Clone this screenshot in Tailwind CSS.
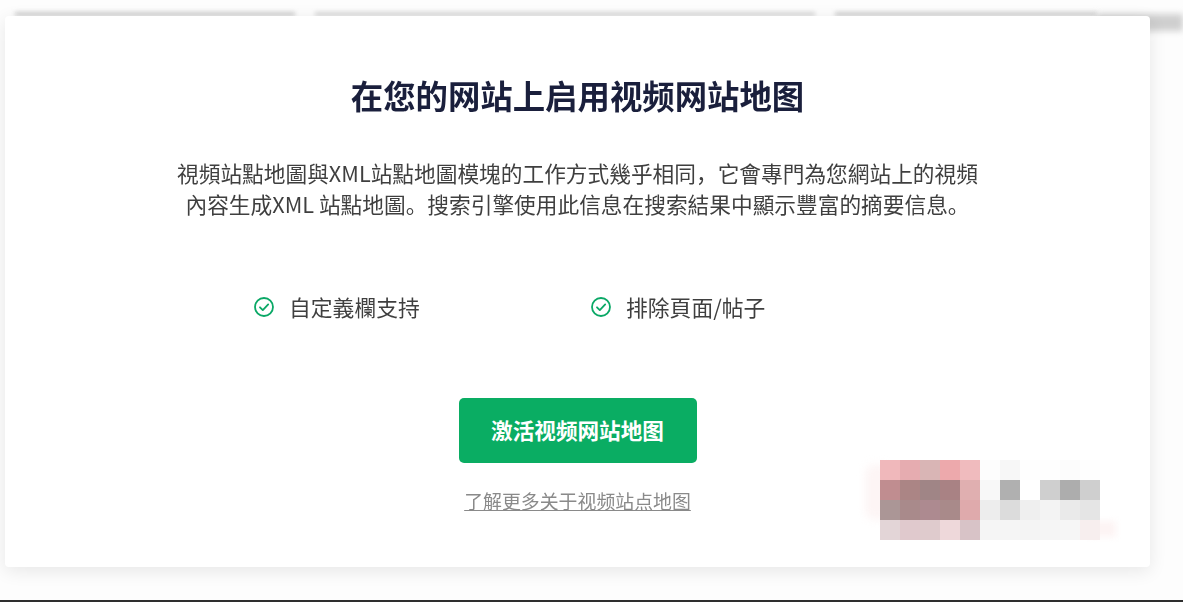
<!DOCTYPE html>
<html lang="zh">
<head>
  <meta charset="UTF-8" />
  <title>Video Sitemap</title>
  <script src="https://cdn.jsdelivr.net/npm/@tailwindcss/browser@4"></script>
</head>
<body class="bg-white font-['Noto_Sans_CJK_SC','Noto_Sans',sans-serif]">
  <div class="relative h-[602px] w-[1183px] overflow-hidden bg-[#fdfdfd] pl-[5px] pt-[16px]">
    <!-- blurred page behind the dialog -->
    <div class="absolute left-[15px] top-[12px] h-[4px] w-[280px] bg-[#cdcdcd] blur-[2px]"></div>
    <div class="absolute left-[315px] top-[12px] h-[4px] w-[500px] bg-[#d6d6d6] blur-[2px]"></div>
    <div class="absolute left-[835px] top-[12px] h-[4px] w-[262px] bg-[#cdcdcd] blur-[2px]"></div>
    <div class="absolute left-[1097px] top-[14px] h-[17px] w-[86px] bg-[#cfcfcf] blur-[3px]"></div>
    <div class="absolute bottom-0 left-0 h-[2px] w-full bg-[#2e2e2e]"></div>

    <div class="relative flex h-[551px] w-[1145px] flex-col items-center rounded-[4px] bg-white pt-[57px] shadow-[0_4px_18px_rgba(0,0,0,0.09)]">
      <h1 class="text-[32.4px] font-bold leading-[44px] text-[#1a1f3c] blur-[0.3px]">在您的网站上启用视频网站地图</h1>
      <p class="mt-[40px] w-[840px] text-center text-[21.7px] leading-[31px] text-[#3f3f3f] blur-[0.3px]">視頻站點地圖與XML站點地圖模塊的工作方式幾乎相同&#xFF0C;它會專門為您網站上的視頻<br />內容生成XML 站點地圖。搜索引擎使用此信息在搜索結果中顯示豐富的摘要信息。</p>

      <div class="mt-[73px] flex w-full pl-[249px] text-[21.8px] leading-[30px] text-[#3f3f3f]">
        <div class="flex w-[337px] items-center gap-[15px]">
          <svg class="h-[20px] w-[20px]" viewBox="0 0 20 20" fill="none" stroke="#0aa866" stroke-width="1.8" stroke-linecap="round" stroke-linejoin="round"><circle cx="10" cy="10" r="9" /><path d="M6 10.3l2.8 2.8L14.2 7.4" /></svg>
          <span class="blur-[0.3px]">自定義欄支持</span>
        </div>
        <div class="flex items-center gap-[15px]">
          <svg class="h-[20px] w-[20px]" viewBox="0 0 20 20" fill="none" stroke="#0aa866" stroke-width="1.8" stroke-linecap="round" stroke-linejoin="round"><circle cx="10" cy="10" r="9" /><path d="M6 10.3l2.8 2.8L14.2 7.4" /></svg>
          <span class="blur-[0.3px]">排除頁面/帖子</span>
        </div>
      </div>

      <button class="mt-[76px] h-[65px] w-[238px] rounded-[5px] bg-[#0aad63] text-[21.6px] font-bold text-white">激活视频网站地图</button>
      <a class="mt-[24px] text-[18.9px] leading-[28px] text-[#8a8a8a] underline blur-[0.3px]">了解更多关于视频站点地图</a>

      <!-- pixelated badge -->
      <div class="absolute left-[860px] top-[448px] h-[56px] w-[24px] rounded-[10px] bg-[#fdf5f5] blur-[4px]"></div>
      <div class="absolute left-[1085px] top-[505px] h-[16px] w-[26px] bg-[#fdf4f4] blur-[3px]"></div>
      <div class="absolute left-[875px] top-[444px] grid w-[220px] grid-cols-11">
        <div class="h-[20px] bg-[#f0b8bb]"></div><div class="h-[20px] bg-[#e6acb0]"></div><div class="h-[20px] bg-[#d9b5b5]"></div><div class="h-[20px] bg-[#eda9ac]"></div><div class="h-[20px] bg-[#f0bbbe]"></div><div class="h-[20px] bg-[#fdfdfd]"></div><div class="h-[20px] bg-[#f7f7f7]"></div><div class="h-[20px] bg-[#fefefe]"></div><div class="h-[20px] bg-[#fefefe]"></div><div class="h-[20px] bg-[#fcfcfc]"></div><div class="h-[20px] bg-[#fefefe]"></div>
        <div class="h-[20px] bg-[#c08d90]"></div><div class="h-[20px] bg-[#ab8585]"></div><div class="h-[20px] bg-[#a08586]"></div><div class="h-[20px] bg-[#a98284]"></div><div class="h-[20px] bg-[#e0afb0]"></div><div class="h-[20px] bg-[#f8f8f8]"></div><div class="h-[20px] bg-[#b0b0b0]"></div><div class="h-[20px] bg-white"></div><div class="h-[20px] bg-[#cfcfcf]"></div><div class="h-[20px] bg-[#adadad]"></div><div class="h-[20px] bg-[#cfcfcf]"></div>
        <div class="h-[20px] bg-[#ab9696]"></div><div class="h-[20px] bg-[#a98a8b]"></div><div class="h-[20px] bg-[#ad8a90]"></div><div class="h-[20px] bg-[#a98a8a]"></div><div class="h-[20px] bg-[#dfaaac]"></div><div class="h-[20px] bg-[#ededed]"></div><div class="h-[20px] bg-[#dcdcdc]"></div><div class="h-[20px] bg-[#efefef]"></div><div class="h-[20px] bg-[#f3f3f3]"></div><div class="h-[20px] bg-[#eaeaea]"></div><div class="h-[20px] bg-[#e5e5e5]"></div>
        <div class="h-[20px] bg-[#e3d5d7]"></div><div class="h-[20px] bg-[#e0c9cd]"></div><div class="h-[20px] bg-[#dfcbcd]"></div><div class="h-[20px] bg-[#eed8da]"></div><div class="h-[20px] bg-[#d8c3c7]"></div><div class="h-[20px] bg-[#f5f5f5]"></div><div class="h-[20px] bg-[#f5f5f5]"></div><div class="h-[20px] bg-[#f4f4f4]"></div><div class="h-[20px] bg-[#f5f5f5]"></div><div class="h-[20px] bg-[#f6f6f6]"></div><div class="h-[20px] bg-[#f7eeee]"></div>
      </div>
    </div>
  </div>
</body>
</html>
